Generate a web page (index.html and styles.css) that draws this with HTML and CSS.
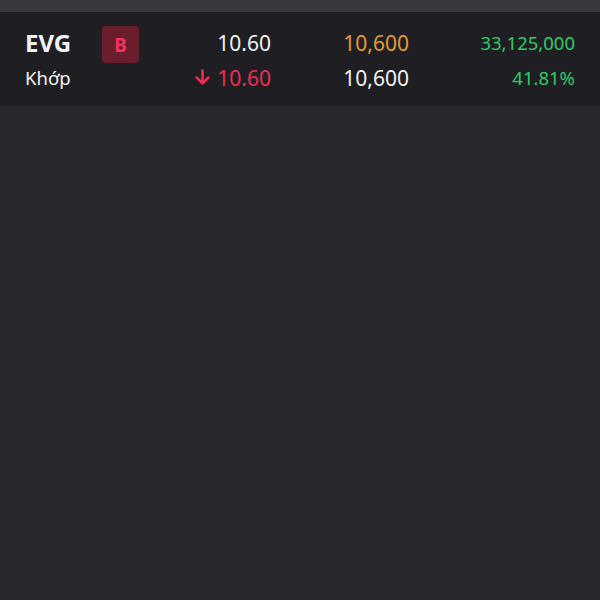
FILE: index.html
```html
<!DOCTYPE html>
<html lang="vi">
<head>
    <meta charset="UTF-8">
    <meta name="viewport" content="width=device-width, initial-scale=1.0">
    <title>Lệnh</title>
    <link rel="stylesheet" href="styles.css">
</head>
<body>
    <div class="topbar"></div>
    <section class="order-row">
        <div class="col col-symbol">
            <div class="line">
                <span class="symbol">EVG</span>
                <span class="side-badge">B</span>
            </div>
            <div class="line">
                <span class="kind">Khớp</span>
            </div>
        </div>
        <div class="col col-price">
            <div class="line">10.60</div>
            <div class="line down">
                <svg class="arrow" viewBox="0 0 16 16" width="17" height="17">
                    <path d="M8 1.5v12M2.5 8l5.5 5.5 5.5-5.5" fill="none" stroke="currentColor" stroke-width="2.4" stroke-linecap="round" stroke-linejoin="round"/>
                </svg>
                10.60
            </div>
        </div>
        <div class="col col-qty">
            <div class="line ref">10,600</div>
            <div class="line">10,600</div>
        </div>
        <div class="col col-value">
            <div class="line up">33,125,000</div>
            <div class="line up">41.81%</div>
        </div>
    </section>
</body>
</html>
```

FILE: styles.css
```css
body {
    margin: 0;
    padding: 0;
    background-color: #28282c;
    color: #f2f2f2;
    font-family: "Noto Sans", "Open Sans", sans-serif;
    height: 600px;
    overflow: hidden;
}
.topbar {
    height: 12px;
    background-color: #39393d;
}
.order-row {
    display: grid;
    grid-template-columns: 114px 132px 138px 166px;
    padding: 14px 0 12px 25px;
    height: 68px;
    background-color: #1f1f23;
}
.col {
    display: flex;
    flex-direction: column;
    justify-content: space-between;
}
.line {
    display: flex;
    align-items: center;
    height: 33px;
    font-size: 21px;
}
.col-price .line,
.col-qty .line,
.col-value .line {
    justify-content: flex-end;
}
.symbol {
    font-size: 24px;
    font-weight: bold;
    width: 77px;
}
.side-badge {
    width: 37px;
    height: 37px;
    border-radius: 4px;
    background-color: #6a1d2d;
    color: #f2345c;
    font-size: 19px;
    font-weight: bold;
    display: flex;
    align-items: center;
    justify-content: center;
    margin-top: 4px;
}
.kind {
    font-size: 18.5px;
}
.down {
    color: #ec2d55;
}
.arrow {
    margin-right: 6px;
}
.ref {
    color: #e39a3a;
}
.col-value .line {
    font-size: 18.5px;
}
.up {
    color: #2fcb68;
}
```
